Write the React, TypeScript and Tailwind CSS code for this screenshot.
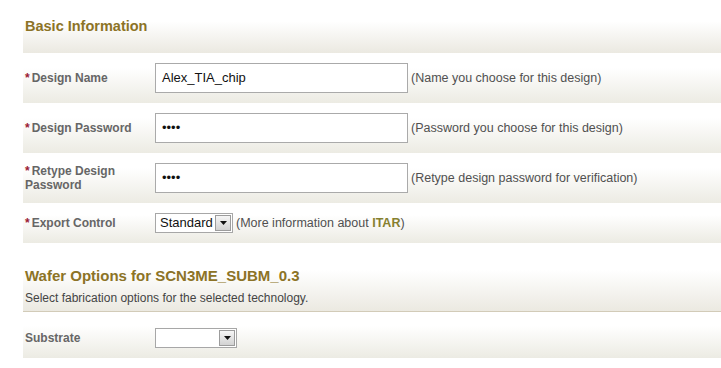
import React from "react";

function SelectBox({ value, width }: { value: string; width: string }) {
  return (
    <div
      className={`flex h-[20px] items-center border border-[#a7a7a7] bg-white ${width}`}
    >
      <div className="flex-1 pl-[4px] text-[13px] leading-[18px] text-[#111]">{value}</div>
      <div className="mr-px flex h-[16px] w-[16px] items-center justify-center border border-[#9c9c9c] bg-gradient-to-b from-[#f6f6f6] to-[#d2d2d2]">
        <svg width="7" height="4" viewBox="0 0 7 4">
          <path d="M0 0h7L3.5 4z" fill="#111" />
        </svg>
      </div>
    </div>
  );
}

function TextBox({ value }: { value: string }) {
  return (
    <div className="flex h-[30px] w-[253px] items-center border border-[#aaaaaa] bg-white pl-[6px] text-[13px] text-[#111]">
      {value}
    </div>
  );
}

function Label({ text, required }: { text: React.ReactNode; required?: boolean }) {
  return (
    <div className="w-[132px] pl-[2px] text-[12px] leading-[14px] font-bold text-[#666]">
      {required && <span className="mr-[2px] text-[#9b1b35]">*</span>}
      {text}
    </div>
  );
}

function Help({ children }: { children: React.ReactNode }) {
  return <div className="ml-[3px] text-[12.5px] text-[#505050]">{children}</div>;
}

const rowBg = "bg-gradient-to-b from-white from-30% to-[#ecebe3]";

export default function App() {
  return (
    <div className="min-h-[368px] bg-white pl-[23px] font-['Liberation_Sans',Arial,sans-serif]">
      <div className="h-[53px] bg-gradient-to-b from-white from-40% to-[#ebe9e1] px-[2px] pt-[18px] text-[14.5px] leading-[17px] font-bold text-[#8c7326]">
        Basic Information
      </div>

      <div className={`flex h-[50px] items-center ${rowBg}`}>
        <Label text="Design Name" required />
        <TextBox value="Alex_TIA_chip" />
        <Help>(Name you choose for this design)</Help>
      </div>

      <div className={`flex h-[50px] items-center ${rowBg}`}>
        <Label text="Design Password" required />
        <TextBox value="••••" />
        <Help>(Password you choose for this design)</Help>
      </div>

      <div className={`flex h-[50px] items-center ${rowBg}`}>
        <Label
          text={
            <>
              Retype Design
              <br />
              Password
            </>
          }
          required
        />
        <TextBox value="••••" />
        <Help>(Retype design password for verification)</Help>
      </div>

      <div className={`flex h-[40px] items-center ${rowBg}`}>
        <Label text="Export Control" required />
        <SelectBox value="Standard" width="w-[78px]" />
        <Help>
          (More information about <span className="font-bold text-[#86802f]">ITAR</span>)
        </Help>
      </div>

      <div className="border-b border-[#d2cbb8] bg-gradient-to-b from-white from-40% to-[#ebe9e1] px-[2px] pt-[24px] pb-[6px]">
        <div className="text-[15px] leading-[17px] font-bold text-[#8c7326]">
          Wafer Options for SCN3ME_SUBM_0.3
        </div>
        <div className="mt-[7px] text-[12px] leading-[14px] text-[#444]">
          Select fabrication options for the selected technology.
        </div>
      </div>

      <div className={`flex items-center pt-[16px] pb-[10px] ${rowBg}`}>
        <Label text="Substrate" />
        <SelectBox value="" width="w-[82px]" />
      </div>
    </div>
  );
}
